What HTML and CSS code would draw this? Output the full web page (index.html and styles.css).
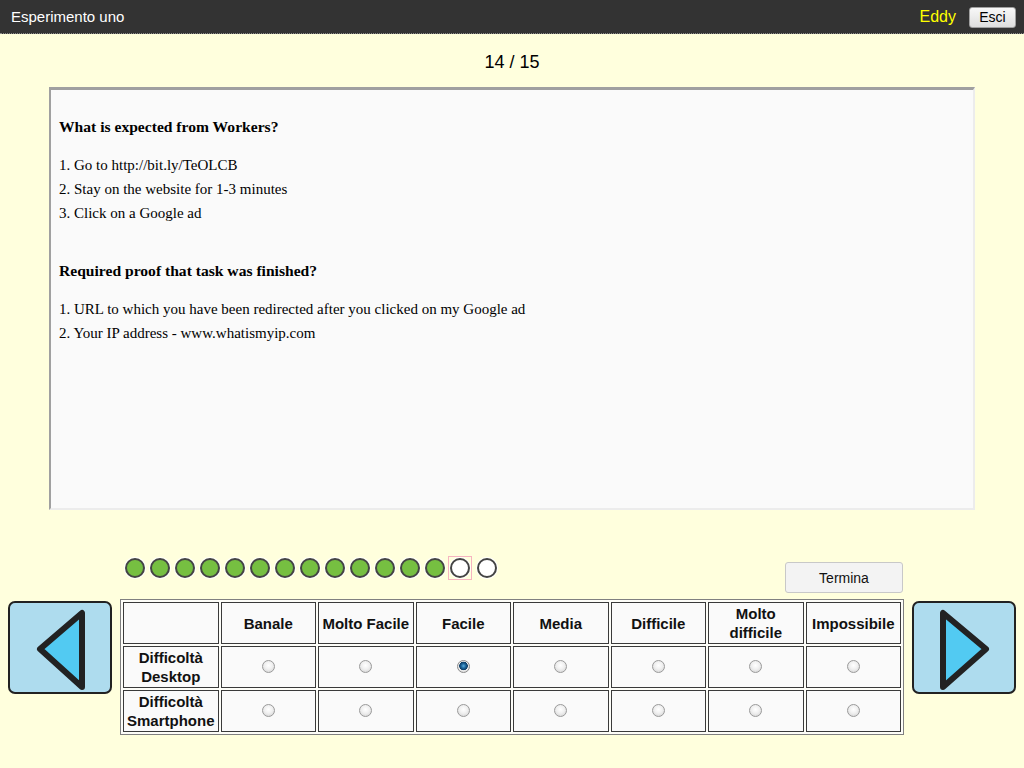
FILE: index.html
```html
<!DOCTYPE html>
<html>
<head>
<meta charset="utf-8">
<title>Esperimento uno</title>
<link rel="stylesheet" href="styles.css">
</head>
<body>
<header class="topbar">
  <div class="title">Esperimento uno</div>
  <div class="user">
    <span class="name">Eddy</span>
    <button class="exit">Esci</button>
  </div>
</header>

<div class="counter">14 / 15</div>

<section class="task">
  <div class="h first">What is expected from Workers?</div>
  <div class="item">1. Go to http://bit.ly/TeOLCB</div>
  <div class="item">2. Stay on the website for 1-3 minutes</div>
  <div class="item">3. Click on a Google ad</div>
  <div class="h second">Required proof that task was finished?</div>
  <div class="item">1. URL to which you have been redirected after you clicked on my Google ad</div>
  <div class="item">2. Your IP address - www.whatismyip.com</div>
</section>

<section class="bottom">
  <div class="toolbar">
    <div class="dots">
      <span class="dot done"><i></i></span>
      <span class="dot done"><i></i></span>
      <span class="dot done"><i></i></span>
      <span class="dot done"><i></i></span>
      <span class="dot done"><i></i></span>
      <span class="dot done"><i></i></span>
      <span class="dot done"><i></i></span>
      <span class="dot done"><i></i></span>
      <span class="dot done"><i></i></span>
      <span class="dot done"><i></i></span>
      <span class="dot done"><i></i></span>
      <span class="dot done"><i></i></span>
      <span class="dot done"><i></i></span>
      <span class="dot current"><i></i></span>
      <span class="dot"><i></i></span>
    </div>
    <button class="finish">Termina</button>
  </div>

  <button class="nav prev" aria-label="Indietro">
    <svg width="100" height="89" viewBox="0 0 100 89">
      <polygon points="30,46 72,10 72,84" fill="#52caf2" stroke="#222" stroke-width="6" stroke-linejoin="round"/>
    </svg>
  </button>

  <table class="grid">
    <tr>
      <th></th>
      <th>Banale</th>
      <th>Molto Facile</th>
      <th>Facile</th>
      <th>Media</th>
      <th>Difficile</th>
      <th>Molto difficile</th>
      <th>Impossibile</th>
    </tr>
    <tr>
      <th>Difficoltà Desktop</th>
      <td><input type="radio" name="d"></td>
      <td><input type="radio" name="d"></td>
      <td><input type="radio" name="d" checked></td>
      <td><input type="radio" name="d"></td>
      <td><input type="radio" name="d"></td>
      <td><input type="radio" name="d"></td>
      <td><input type="radio" name="d"></td>
    </tr>
    <tr>
      <th>Difficoltà Smartphone</th>
      <td><input type="radio" name="s"></td>
      <td><input type="radio" name="s"></td>
      <td><input type="radio" name="s"></td>
      <td><input type="radio" name="s"></td>
      <td><input type="radio" name="s"></td>
      <td><input type="radio" name="s"></td>
      <td><input type="radio" name="s"></td>
    </tr>
  </table>

  <button class="nav next" aria-label="Avanti">
    <svg width="100" height="89" viewBox="0 0 100 89">
      <polygon points="29,10 29,84 72,46" fill="#52caf2" stroke="#222" stroke-width="6" stroke-linejoin="round"/>
    </svg>
  </button>
</section>
</body>
</html>
```

FILE: styles.css
```css
* { box-sizing: border-box; }

html, body {
  margin: 0;
  padding: 0;
}

body {
  background: #ffffdd;
  font-family: "Liberation Sans", Arial, sans-serif;
  color: #000;
  width: 1024px;
  height: 768px;
  overflow: hidden;
}

.topbar {
  height: 34px;
  background: #333333;
  border-bottom: 1px dotted #8a8a8a;
  display: flex;
  align-items: center;
  justify-content: space-between;
  padding: 0 8px 0 11px;
}

.title {
  color: #fff;
  font-size: 15px;
  margin-top: -1px;
}

.user {
  display: flex;
  align-items: center;
  gap: 13px;
}

.name {
  color: #ffff00;
  font-size: 16px;
}

.exit {
  width: 47px;
  height: 21px;
  padding: 0;
  font-family: "Liberation Sans", Arial, sans-serif;
  font-size: 14px;
  color: #000;
  background: linear-gradient(#f8f8f8, #dedede);
  border: 1px solid #a0a0a0;
  border-radius: 3px;
  margin-top: 1px;
}

.counter {
  margin-top: 18px;
  height: 20px;
  line-height: 20px;
  text-align: center;
  font-size: 18px;
}

.task {
  margin: 15px 49px 0 49px;
  height: 423px;
  background: #fafafa;
  border-top: 3px solid #a0a0a0;
  border-left: 2px solid #a0a0a0;
  border-right: 2px solid #ececec;
  border-bottom: 2px solid #ececec;
  padding: 1px 8px 0 8px;
  font-family: "Liberation Serif", "Times New Roman", serif;
  font-size: 15px;
  line-height: 24px;
}

.task .h {
  font-weight: bold;
  font-size: 15.6px;
  margin-bottom: 14px;
}

.task .h.first { margin-top: 24px; }
.task .h.second { margin-top: 34px; }

.bottom {
  margin: 46px 0 0 8px;
  display: grid;
  grid-template-columns: 104px 784px 104px;
  grid-template-rows: 43px auto;
  column-gap: 8px;
}

.toolbar {
  grid-column: 2;
  grid-row: 1;
  display: flex;
  justify-content: space-between;
  align-items: flex-start;
}

.dots {
  display: flex;
  gap: 1px;
  padding-left: 3px;
}

.dot {
  width: 24px;
  height: 24px;
  border: 1px solid transparent;
  display: flex;
  align-items: center;
  justify-content: center;
}

.dot.current {
  border-color: #f6b4c0;
  margin-right: 2px;
}

.dot i {
  display: block;
  width: 20px;
  height: 20px;
  border-radius: 50%;
  border: 2px solid #444;
  background: #fff;
  box-shadow: 0 0 0 1px #fffffa;
}

.dot.done i {
  background: #76bf41;
}

.finish {
  margin-top: 6px;
  margin-right: 1px;
  width: 118px;
  height: 31px;
  padding: 0;
  font-family: "Liberation Sans", Arial, sans-serif;
  font-size: 14px;
  color: #111;
  background: #f3f3f3;
  border: 1px solid #c8c8c8;
  border-radius: 3px;
}

.nav {
  grid-row: 2;
  margin-top: 2px;
  width: 104px;
  height: 93px;
  padding: 0;
  background: #aedcee;
  border: 2px solid #222;
  border-radius: 7px;
  display: flex;
  align-items: center;
  justify-content: center;
}

.nav svg { display: block; }

.prev { grid-column: 1; }
.next { grid-column: 3; }

.grid {
  grid-column: 2;
  grid-row: 2;
  width: 784px;
  table-layout: fixed;
  border: 1px solid #808080;
  border-spacing: 2px;
  background: #fdfdf8;
}

.grid th,
.grid td {
  height: 42px;
  padding: 0 1px;
  border: 1px solid #3a3a3a;
  background: #fafafa;
  text-align: center;
  vertical-align: middle;
  font-size: 15px;
  line-height: 19px;
  color: #111;
}

.grid th {
  font-weight: bold;
}

.grid input[type="radio"] {
  -webkit-appearance: none;
  appearance: none;
  margin: 0;
  width: 13px;
  height: 13px;
  border-radius: 50%;
  border: 1px solid #9a9a9a;
  background: radial-gradient(circle at 50% 40%, #ffffff 0%, #f0f0f0 45%, #cfcfcf 100%);
  vertical-align: middle;
  position: relative;
  top: -2px;
}

.grid input[type="radio"]:checked {
  border-color: #8a8a8a;
  background:
    radial-gradient(circle at 50% 45%, #5fb0e0 0px, #1f6aa0 2px, #0d3d66 4px, rgba(0,0,0,0) 4.6px),
    radial-gradient(circle at 50% 40%, #ffffff 0%, #eeeeee 55%, #cfcfcf 100%);
}
```
